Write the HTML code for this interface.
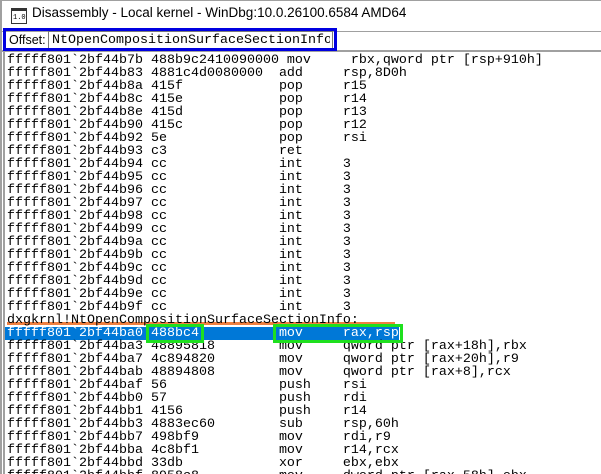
<!DOCTYPE html>
<html><head><style>
html,body{margin:0;padding:0;width:601px;height:474px;overflow:hidden;background:#fff;position:relative;font-family:"Liberation Sans",sans-serif}
.abs{position:absolute}
.row{position:absolute;left:7px;height:13px;white-space:pre;font-family:"Liberation Mono",monospace;font-size:13.33px;line-height:13px;letter-spacing:0}
</style></head><body>
<div class="abs" style="left:0;top:0;width:601px;height:1px;background:#a0a0a0"></div>
<div class="abs" style="left:0;top:0;width:2px;height:474px;background:#a0a0a0"></div>
<div class="abs" style="left:3px;top:52px;width:2px;height:422px;background:#a0a0a0"></div>
<div class="abs" style="left:11px;top:8px;width:14px;height:14px;border:1px solid #333;background:#fff"></div>
<div class="abs" style="left:11px;top:8px;width:16px;height:3px;background:#333"></div>
<div class="abs" style="left:13px;top:14px;font-size:7px;font-family:'Liberation Mono',monospace;color:#000">1.0</div>
<div class="abs" style="left:32px;top:5px;font-size:13.5px;color:#000;white-space:nowrap">Disassembly - Local kernel - WinDbg:10.0.26100.6584 AMD64</div>
<div class="abs" style="left:0;top:31px;width:601px;height:1px;background:#a0a0a0"></div>
<div class="abs" style="left:0;top:50px;width:601px;height:2px;background:#a0a0a0"></div>
<div class="abs" style="left:9px;top:33px;font-size:12.5px;color:#000;white-space:nowrap">Offset:</div>
<div class="abs" style="left:48px;top:31px;width:283px;height:17px;border:1px solid #7a7a7a;background:#fff"></div>
<div class="abs" style="left:52px;top:33px;font-family:'Liberation Mono',monospace;font-size:13.33px;color:#000;white-space:pre;width:278px;overflow:hidden">NtOpenCompositionSurfaceSectionInfo</div>
<div class="abs" style="left:3px;top:28px;width:328px;height:17px;border:3px solid #0000e0"></div>

<div class="abs" style="left:5px;top:327px;width:394px;height:13px;background:#0078d7"></div>
<div class="abs" style="left:7px;top:322px;width:388px;height:3px;background:#f08040"></div>

<div class="row" style="top:54px">fffff801`2bf44b7b 488b9c2410090000 mov     rbx,qword ptr [rsp+910h]</div>
<div class="row" style="top:67px">fffff801`2bf44b83 4881c4d0080000  add     rsp,8D0h</div>
<div class="row" style="top:80px">fffff801`2bf44b8a 415f            pop     r15</div>
<div class="row" style="top:93px">fffff801`2bf44b8c 415e            pop     r14</div>
<div class="row" style="top:106px">fffff801`2bf44b8e 415d            pop     r13</div>
<div class="row" style="top:119px">fffff801`2bf44b90 415c            pop     r12</div>
<div class="row" style="top:132px">fffff801`2bf44b92 5e              pop     rsi</div>
<div class="row" style="top:145px">fffff801`2bf44b93 c3              ret</div>
<div class="row" style="top:158px">fffff801`2bf44b94 cc              int     3</div>
<div class="row" style="top:171px">fffff801`2bf44b95 cc              int     3</div>
<div class="row" style="top:184px">fffff801`2bf44b96 cc              int     3</div>
<div class="row" style="top:197px">fffff801`2bf44b97 cc              int     3</div>
<div class="row" style="top:210px">fffff801`2bf44b98 cc              int     3</div>
<div class="row" style="top:223px">fffff801`2bf44b99 cc              int     3</div>
<div class="row" style="top:236px">fffff801`2bf44b9a cc              int     3</div>
<div class="row" style="top:249px">fffff801`2bf44b9b cc              int     3</div>
<div class="row" style="top:262px">fffff801`2bf44b9c cc              int     3</div>
<div class="row" style="top:275px">fffff801`2bf44b9d cc              int     3</div>
<div class="row" style="top:288px">fffff801`2bf44b9e cc              int     3</div>
<div class="row" style="top:301px">fffff801`2bf44b9f cc              int     3</div>
<div class="row" style="top:314px">dxgkrnl!NtOpenCompositionSurfaceSectionInfo:</div>
<div class="row" style="top:327px;color:#fff">fffff801`2bf44ba0 488bc4          mov     rax,rsp</div>
<div class="row" style="top:340px">fffff801`2bf44ba3 48895818        mov     qword ptr [rax+18h],rbx</div>
<div class="row" style="top:353px">fffff801`2bf44ba7 4c894820        mov     qword ptr [rax+20h],r9</div>
<div class="row" style="top:366px">fffff801`2bf44bab 48894808        mov     qword ptr [rax+8],rcx</div>
<div class="row" style="top:379px">fffff801`2bf44baf 56              push    rsi</div>
<div class="row" style="top:392px">fffff801`2bf44bb0 57              push    rdi</div>
<div class="row" style="top:405px">fffff801`2bf44bb1 4156            push    r14</div>
<div class="row" style="top:418px">fffff801`2bf44bb3 4883ec60        sub     rsp,60h</div>
<div class="row" style="top:431px">fffff801`2bf44bb7 498bf9          mov     rdi,r9</div>
<div class="row" style="top:444px">fffff801`2bf44bba 4c8bf1          mov     r14,rcx</div>
<div class="row" style="top:457px">fffff801`2bf44bbd 33db            xor     ebx,ebx</div>
<div class="row" style="top:470px">fffff801`2bf44bbf 8958c8          mov     dword ptr [rax-58h],ebx</div>

<div class="abs" style="left:146px;top:324px;width:52px;height:13px;border:3px solid #1ee01e"></div>
<div class="abs" style="left:273px;top:324px;width:124px;height:13px;border:3px solid #1ee01e"></div>
</body></html>
